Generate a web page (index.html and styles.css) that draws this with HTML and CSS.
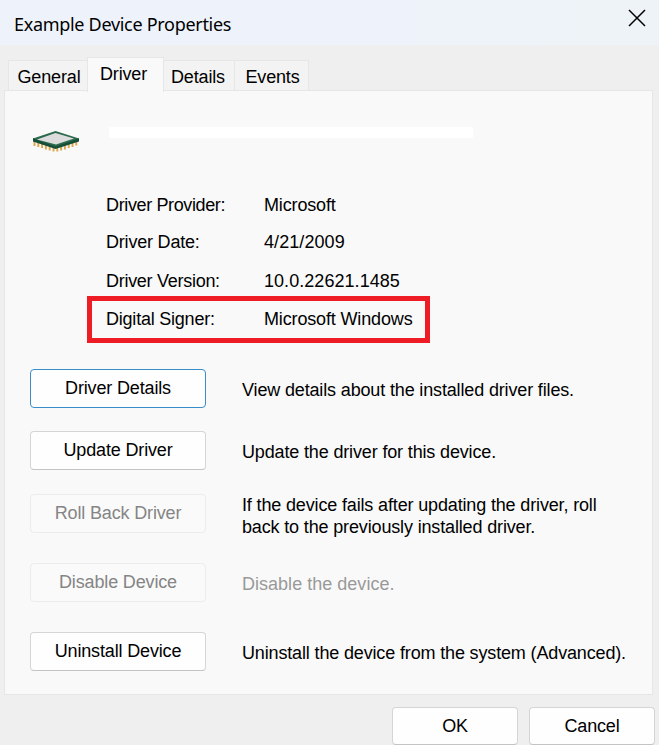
FILE: index.html
```html
<!DOCTYPE html>
<html lang="en">
<head>
<meta charset="utf-8">
<title>Example Device Properties</title>
<link rel="stylesheet" href="styles.css">
</head>
<body>
<div class="dialog">
  <header class="titlebar">
    <h1 class="title">Example Device Properties</h1>
    <svg class="close" viewBox="0 0 18 18" role="img" aria-label="Close"><path d="M1 1L17 17M17 1L1 17"/></svg>
  </header>
  <nav class="tabs">
    <span class="tab tab-general">General</span>
    <span class="tab tab-active">Driver</span>
    <span class="tab tab-details">Details</span>
    <span class="tab tab-events">Events</span>
  </nav>
  <main class="panel">
    <div class="device">
      <svg class="chip" viewBox="0 0 48 22">
        <path class="pins" d="M2.5 10v5M6.300 11v5M10.100 12v5M13.900 13.500v5M17.700 14.500v5M21.500 15.500v5M25.300 15.500v5M29.100 14.500v5M32.900 13.500v5M36.700 12v5M40.500 11v5M44.300 10v4.500"/>
        <path class="board-edge" d="M1 7L23.500 14L47 7V10.500L23.500 18L1 10.500Z"/>
        <path class="board" d="M1 7.500L23.500 0L47 7.500L23.500 15.500Z"/>
        <path class="die" d="M5 8.500L23.500 2L42 7.500L24 13.500Z"/>
      </svg>
      <div class="device-name"></div>
    </div>
    <dl class="info">
      <div class="info-row"><dt>Driver Provider:</dt><dd>Microsoft</dd></div>
      <div class="info-row date"><dt>Driver Date:</dt><dd>4/21/2009</dd></div>
      <div class="info-row version"><dt>Driver Version:</dt><dd>10.0.22621.1485</dd></div>
      <div class="info-row signer"><dt>Digital Signer:</dt><dd>Microsoft Windows</dd></div>
    </dl>
    <div class="actions">
      <div class="action"><button class="button focused">Driver Details</button><p>View details about the installed driver files.</p></div>
      <div class="action"><button class="button">Update Driver</button><p>Update the driver for this device.</p></div>
      <div class="action rollback"><button class="button" disabled>Roll Back Driver</button><p>If the device fails after updating the driver, roll<br>back to the previously installed driver.</p></div>
      <div class="action muted"><button class="button" disabled>Disable Device</button><p>Disable the device.</p></div>
      <div class="action"><button class="button">Uninstall Device</button><p>Uninstall the device from the system (Advanced).</p></div>
    </div>
  </main>
  <footer class="footer">
    <button class="button">OK</button>
    <button class="button">Cancel</button>
  </footer>
</div>
</body>
</html>
```
FILE: styles.css
```css
* { box-sizing: border-box; }
body {
  margin: 0;
  color: #000;
  background: #efefef;
  font: 18px/22px "Liberation Sans", Arial, sans-serif;
  letter-spacing: -0.15px;
  overflow: hidden;
}
.dialog { display: flex; flex-direction: column; width: 659px; height: 745px; }
.titlebar {
  display: flex;
  justify-content: space-between;
  height: 45px;
  padding: 9px 13px 0 14px;
  background: linear-gradient(90deg, #eef3fb 55%, #eef3f7);
}
.title {
  margin: 3px 0 0;
  font: 18px/24px "Noto Sans", "Open Sans", sans-serif;
  letter-spacing: -0.3px;
  height: 24px;
}
.close { width: 18px; height: 18px; fill: none; stroke: #000; stroke-width: 1.5; }
.tabs { display: flex; align-items: flex-end; height: 46px; padding-left: 8px; }
.tab {
  height: 31px;
  padding-top: 5px;
  text-align: center;
  background: #f3f3f3;
  border: 1px solid #e6e6e6;
  border-left: 0;
}
.tab-general { width: 79px; padding-left: 2px; border-left: 1px solid #e6e6e6; border-right: 0; }
.tab-active {
  width: 77px;
  height: 35px;
  margin-bottom: -1px;
  padding-top: 5px;
  padding-right: 4px;
  background: #f9f9f9;
  border: 1px solid #e6e6e6;
  border-bottom: 0;
  z-index: 1;
}
.tab-details { width: 71px; padding-right: 2px; }
.tab-events { width: 74px; padding-left: 2px; }
.panel {
  width: 649px;
  height: 606px;
  margin: -1px 0 0 4px;
  padding: 36px 25px 0;
  background: #f9f9f9;
  border: 1px solid #e6e6e6;
}
.device { display: flex; gap: 29px; height: 59px; padding-left: 2px; }
.chip { width: 48px; height: 22px; margin-top: 4px; }
.pins { stroke: #dba548; stroke-width: 1.9; fill: none; }
.board-edge { fill: #164f38; }
.board { fill: #2b6a4d; }
.die { fill: #dcdcdc; }
.device-name { width: 364px; height: 11px; background: #fff; }
.info { width: 343px; margin: 0 0 0 57px; height: 157px; }
.info-row { display: flex; height: 38px; align-items: center; padding-left: 19px; }
.info-row dt { width: 158px; letter-spacing: -0.37px; }
.info-row dd { margin: 0; }
.info-row.date { height: 36px; }
.info-row.date dt { letter-spacing: -0.2px; }
.info-row.date dd { letter-spacing: 0.08px; }
.info-row.version { height: 42px; }
.info-row.version dt { letter-spacing: -0.28px; }
.info-row.version dd { letter-spacing: 0.05px; }
.info-row.signer { height: 47px; margin-top: -6px; padding-left: 14px; border: 5px solid #ee1c25; }
.info-row.signer dt { letter-spacing: -0.22px; }
.actions { display: grid; grid-template-rows: 39px 40px 46px 46px 39px; row-gap: 23px; padding-top: 26px; }
.action { display: flex; gap: 36px; height: 39px; }
.action p { margin: 10px 0 0; white-space: nowrap; }
.rollback p { margin-top: 0; }
.button {
  width: 176px;
  height: 39px;
  padding: 0;
  color: #000;
  font: inherit;
  letter-spacing: inherit;
  background: #fefefe;
  border: 1px solid #d5d5d5;
  border-bottom-color: #c4c4c4;
  border-radius: 4px;
}
.button.focused { border-color: #3b8dca; }
.button:disabled { color: #858585; background: #fafafa; border-color: #ececec; }
.muted p { color: #999; letter-spacing: 0.02px; }
.footer { display: flex; justify-content: flex-end; gap: 11px; padding: 12px 4px 0 0; }
.footer .button { width: 126px; height: 38px; padding: 1px 0 0; }
```
